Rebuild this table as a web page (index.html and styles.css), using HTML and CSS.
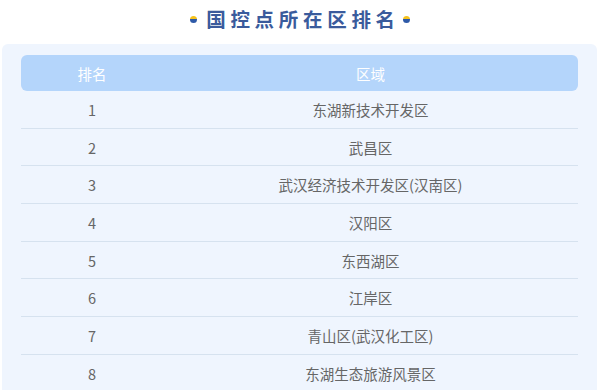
FILE: index.html
```html
<!DOCTYPE html>
<html lang="zh">
<head>
<meta charset="utf-8">
<link rel="stylesheet" href="styles.css">
</head>
<body>
<div class="title">
  <span class="dot"></span>
  <h1>国控点所在区排名</h1>
  <span class="dot"></span>
</div>
<div class="panel">
  <div class="head">
    <div class="c1">排名</div>
    <div class="c2">区域</div>
  </div>
  <div class="row"><div class="c1">1</div><div class="c2">东湖新技术开发区</div></div>
  <div class="row"><div class="c1">2</div><div class="c2">武昌区</div></div>
  <div class="row"><div class="c1">3</div><div class="c2">武汉经济技术开发区(汉南区)</div></div>
  <div class="row"><div class="c1">4</div><div class="c2">汉阳区</div></div>
  <div class="row"><div class="c1">5</div><div class="c2">东西湖区</div></div>
  <div class="row"><div class="c1">6</div><div class="c2">江岸区</div></div>
  <div class="row"><div class="c1">7</div><div class="c2">青山区(武汉化工区)</div></div>
  <div class="row"><div class="c1">8</div><div class="c2">东湖生态旅游风景区</div></div>
</div>
</body>
</html>
```
FILE: styles.css
```css
html, body {
  margin: 0;
  padding: 0;
  background: #ffffff;
  font-family: "Noto Sans CJK SC", "Noto Sans", sans-serif;
  overflow: hidden;
}
.title {
  height: 44px;
  display: flex;
  align-items: center;
  justify-content: center;
  gap: 7px;
  padding-bottom: 7px;
  box-sizing: border-box;
}
.title h1 {
  margin: 0 -4px 0 2px;
  font-size: 19.5px;
  font-weight: 700;
  color: #3a5b9c;
  letter-spacing: 4.7px;
  line-height: 24px;
}
.dot {
  width: 7px;
  height: 7px;
  border-radius: 50%;
  background: linear-gradient(to bottom, #f6c21c 0 50%, #2e5aa8 50% 100%);
  margin-top: 2px;
}
.panel {
  margin: 0 3px 0 2px;
  background: #eff5fe;
  border-radius: 6px 6px 0 0;
  padding: 11px 19px 0 19px;
  height: 346px;
  overflow: hidden;
}
.head {
  display: flex;
  height: 36px;
  align-items: center;
  background: #b4d5fb;
  border-radius: 6px;
  color: #ffffff;
  font-size: 14.5px;
}
.row {
  display: flex;
  align-items: center;
  height: 37.7px;
  box-sizing: border-box;
  border-bottom: 1px solid #d6e2ef;
  color: #666666;
  font-size: 14.5px;
}
.c1 {
  width: 142px;
  text-align: center;
}
.c2 {
  flex: 1;
  text-align: center;
}
```
